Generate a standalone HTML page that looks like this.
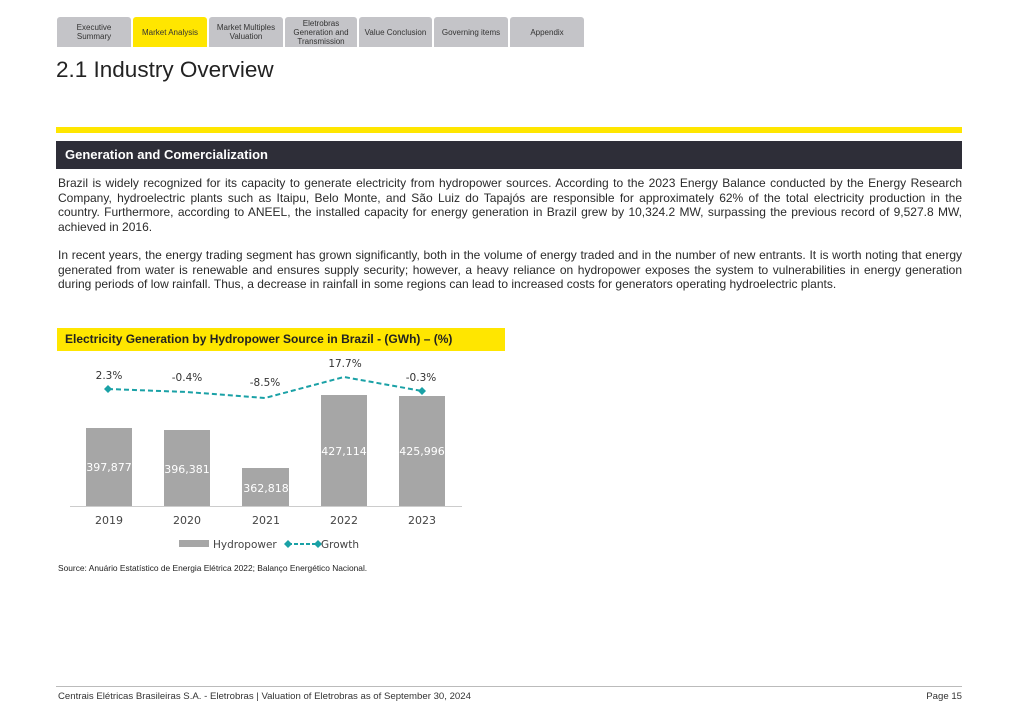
<!DOCTYPE html>
<html><head><meta charset="utf-8"><style>
*{margin:0;padding:0;box-sizing:border-box}
body{width:1019px;height:720px;background:#fff;position:relative;font-family:"Liberation Sans",Arial,sans-serif;color:#222;overflow:hidden}
.tab{position:absolute;top:17px;height:30px;background:#c4c4c8;border-radius:3px 3px 0 0;font-size:8px;line-height:9px;color:#333;display:flex;align-items:center;justify-content:center;text-align:center}
.abs{position:absolute}
div.t{position:absolute;left:58px;width:904px;font-size:12px;line-height:14.7px;color:#2a2a2a}
div.t span{display:block;text-align:justify;text-align-last:justify;white-space:nowrap}
div.t span.l{text-align-last:left}
</style></head><body>
<div class="tab" style="left:57px;width:74px">Executive<br>Summary</div>
<div class="tab" style="left:133px;width:74px;background:#ffe600">Market Analysis</div>
<div class="tab" style="left:209px;width:74px">Market Multiples<br>Valuation</div>
<div class="tab" style="left:285px;width:72px">Eletrobras<br>Generation and<br>Transmission</div>
<div class="tab" style="left:359px;width:73px">Value Conclusion</div>
<div class="tab" style="left:434px;width:74px">Governing items</div>
<div class="tab" style="left:510px;width:74px">Appendix</div>
<div class="abs" style="left:56px;top:57px;font-size:22.5px;color:#222">2.1 Industry Overview</div>
<div class="abs" style="left:56px;top:127px;width:906px;height:6px;background:#ffe600"></div>
<div class="abs" style="left:56px;top:141px;width:906px;height:28px;background:#2e2e38;color:#fff;font-weight:bold;font-size:13px;line-height:28px;padding-left:9px">Generation and Comercialization</div>
<div class="t" style="top:176px"><span>Brazil is widely recognized for its capacity to generate electricity from hydropower sources. According to the 2023 Energy Balance conducted by the Energy Research</span><span>Company, hydroelectric plants such as Itaipu, Belo Monte, and São Luiz do Tapajós are responsible for approximately 62% of the total electricity production in the</span><span>country. Furthermore, according to ANEEL, the installed capacity for energy generation in Brazil grew by 10,324.2 MW, surpassing the previous record of 9,527.8 MW,</span><span class="l">achieved in 2016.</span></div>
<div class="t" style="top:248px"><span>In recent years, the energy trading segment has grown significantly, both in the volume of energy traded and in the number of new entrants. It is worth noting that energy</span><span>generated from water is renewable and ensures supply security; however, a heavy reliance on hydropower exposes the system to vulnerabilities in energy generation</span><span class="l">during periods of low rainfall. Thus, a decrease in rainfall in some regions can lead to increased costs for generators operating hydroelectric plants.</span></div>
<div class="abs" style="left:57px;top:328px;width:448px;height:23px;background:#ffe600;font-weight:bold;font-size:12px;line-height:23px;padding-left:8px;color:#222">Electricity Generation by Hydropower Source in Brazil - (GWh) – (%)</div>
<svg class="abs" style="left:0;top:0" width="1019" height="720" font-family="DejaVu Sans, sans-serif">
<g fill="#a6a6a6">
<rect x="86" y="428" width="46" height="78"/><rect x="164" y="430" width="46" height="76"/><rect x="242" y="468" width="47" height="38"/><rect x="321" y="395" width="46" height="111"/><rect x="399" y="396" width="46" height="110"/>
</g>
<line x1="70" y1="506.5" x2="462" y2="506.5" stroke="#ccc"/>
<g fill="#fff" font-size="11" text-anchor="middle">
<text x="109" y="471">397,877</text><text x="187" y="473">396,381</text><text x="266" y="492">362,818</text><text x="344" y="455">427,114</text><text x="422" y="455">425,996</text>
</g>
<polyline points="108,389 187,392 265,398 344,377 422,391" fill="none" stroke="#1aa1a6" stroke-width="2" stroke-dasharray="5,3"/>
<g fill="#1aa1a6"><path d="M108 385l4 4-4 4-4-4z"/><path d="M422 387l4 4-4 4-4-4z"/></g>
<g fill="#333" font-size="10.5" text-anchor="middle">
<text x="109" y="379">2.3%</text><text x="187" y="381">-0.4%</text><text x="265" y="386">-8.5%</text><text x="345" y="367">17.7%</text><text x="421" y="381">-0.3%</text>
</g>
<g fill="#444" font-size="11" text-anchor="middle">
<text x="109" y="524">2019</text><text x="187" y="524">2020</text><text x="266" y="524">2021</text><text x="344" y="524">2022</text><text x="422" y="524">2023</text>
</g>
<rect x="179" y="540" width="30" height="7" fill="#a6a6a6"/>
<text x="213" y="548" font-size="10.5" fill="#444">Hydropower</text>
<line x1="288" y1="544" x2="318" y2="544" stroke="#1aa1a6" stroke-width="2" stroke-dasharray="4,2"/>
<path d="M288 540l4 4-4 4-4-4zM318 540l4 4-4 4-4-4z" fill="#1aa1a6"/>
<text x="321" y="548" font-size="10.5" fill="#444">Growth</text>
<line x1="56" y1="686.5" x2="962" y2="686.5" stroke="#bbb"/>
</svg>
<div class="abs" style="left:58px;top:563px;font-size:8.4px;color:#222">Source: Anuário Estatístico de Energia Elétrica 2022; Balanço Energético Nacional.</div>
<div class="abs" style="left:58px;top:691px;font-size:9.6px;color:#333">Centrais Elétricas Brasileiras S.A. - Eletrobras | Valuation of Eletrobras as of September 30, 2024</div>
<div class="abs" style="right:57px;top:691px;font-size:9.6px;color:#333">Page 15</div>
</body></html>
